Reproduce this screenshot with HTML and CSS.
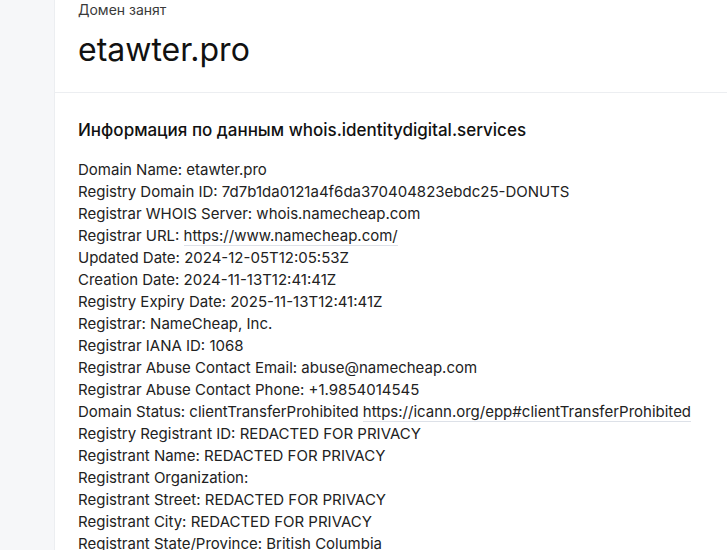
FILE: index.html
```html
<!DOCTYPE html>
<html lang="ru">
    <head>
        <meta charset="UTF-8">
        <meta name="viewport" content="width=device-width, initial-scale=1.0">
        <title>etawter.pro — whois</title>
        <link rel="stylesheet" href="styles.css">
    </head>
    <body>
        <div class="layout">
            <aside class="sidebar"></aside>
            <main class="content">
                <div class="domain-head">
                    <div class="status">Домен занят</div>
                    <h1 class="domain">etawter.pro</h1>
                </div>
                <div class="whois">
                    <h2>Информация по данным whois.identitydigital.services</h2>
                    <div class="whois-lines">
                        <div>Domain Name: etawter.pro</div>
                        <div>Registry Domain ID: 7d7b1da0121a4f6da370404823ebdc25-DONUTS</div>
                        <div>Registrar WHOIS Server: whois.namecheap.com</div>
                        <div>Registrar URL: <a href="#">https://www.namecheap.com/</a></div>
                        <div>Updated Date: 2024-12-05T12:05:53Z</div>
                        <div>Creation Date: 2024-11-13T12:41:41Z</div>
                        <div>Registry Expiry Date: 2025-11-13T12:41:41Z</div>
                        <div>Registrar: NameCheap, Inc.</div>
                        <div>Registrar IANA ID: 1068</div>
                        <div>Registrar Abuse Contact Email: abuse@namecheap.com</div>
                        <div>Registrar Abuse Contact Phone: +1.9854014545</div>
                        <div>Domain Status: clientTransferProhibited <a href="#">https://icann.org/epp#clientTransferProhibited</a></div>
                        <div>Registry Registrant ID: REDACTED FOR PRIVACY</div>
                        <div>Registrant Name: REDACTED FOR PRIVACY</div>
                        <div>Registrant Organization:</div>
                        <div>Registrant Street: REDACTED FOR PRIVACY</div>
                        <div>Registrant City: REDACTED FOR PRIVACY</div>
                        <div>Registrant State/Province: British Columbia</div>
                    </div>
                </div>
            </main>
        </div>
    </body>
</html>
```
FILE: styles.css
```css
body {
    margin: 0;
    font-family: Inter, "Noto Sans", sans-serif;
    color: #1f1f1f;
    background-color: #ffffff;
}
.layout {
    display: flex;
    min-height: 100vh;
}
.sidebar {
    width: 54px;
    flex-shrink: 0;
    background-color: #f6f7f9;
    border-right: 1px solid #eceef1;
}
.content {
    flex: 1;
}
.domain-head {
    padding: 0 23px 21px;
    border-bottom: 1px solid #eceef1;
}
.status {
    font-size: 14px;
    color: #3a3a3a;
    line-height: 20px;
}
h1.domain {
    margin: 9px 0 0;
    font-size: 32px;
    font-weight: 400;
    line-height: 42px;
    color: #111;
}
.whois {
    padding: 26px 23px;
}
.whois h2 {
    margin: 0 0 18px;
    font-size: 17px;
    font-weight: 500;
    line-height: 22px;
    color: #111;
}
.whois-lines {
    font-size: 15px;
    line-height: 22px;
    color: #222;
}
.whois-lines a {
    color: inherit;
    text-decoration: none;
    border-bottom: 1px solid #dde1e8;
}
```
